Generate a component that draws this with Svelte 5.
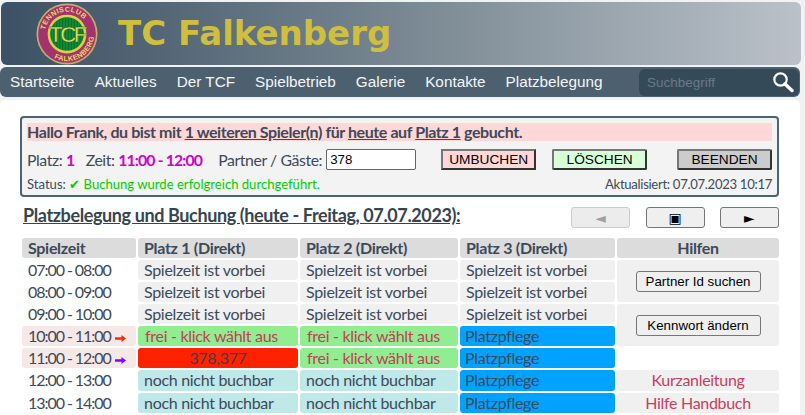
<script>
  const vorbei = 'Spielzeit ist vorbei';
  const frei = 'frei - klick wählt aus';
  const noch = 'noch nicht buchbar';
  const pflege = 'Platzpflege';
  const nav = ['Startseite', 'Aktuelles', 'Der TCF', 'Spielbetrieb', 'Galerie', 'Kontakte', 'Platzbelegung'];
  const rows = [
    { t: '07:00 - 08:00', c: [['past', vorbei], ['past', vorbei], ['past', vorbei]] },
    { t: '08:00 - 09:00', c: [['past', vorbei], ['past', vorbei], ['past', vorbei]] },
    { t: '09:00 - 10:00', c: [['past', vorbei], ['past', vorbei], ['past', vorbei]] },
    { t: '10:00 - 11:00', a: 'red', c: [['free', frei], ['free', frei], ['care', pflege]] },
    { t: '11:00 - 12:00', a: 'violet', c: [['booked', '378,377'], ['free', frei], ['care', pflege]] },
    { t: '12:00 - 13:00', c: [['later', noch], ['later', noch], ['care', pflege]] },
    { t: '13:00 - 14:00', c: [['later', noch], ['later', noch], ['care', pflege]] }
  ];
</script>

<div class="page">
  <header class="banner">
    <svg class="logo" viewBox="0 0 64 64" width="62" height="62" aria-label="Tennisclub Falkenberg">
      <defs>
        <path id="arcTop" d="M9 32 A23 23 0 0 1 55 32" />
        <path id="arcBot" d="M4 32 A28 28 0 0 0 60 32" />
        <pattern id="stripes" width="3" height="3" patternUnits="userSpaceOnUse">
          <rect width="3" height="3" fill="#138a35" />
          <rect width="1" height="3" fill="#0c6a2a" />
        </pattern>
      </defs>
      <circle cx="32" cy="32" r="31.5" fill="#c2b06a" />
      <circle cx="32" cy="32" r="29.8" fill="#a2336c" />
      <circle cx="32" cy="32" r="20" fill="#d8d24a" />
      <circle cx="32" cy="32" r="17.4" fill="url(#stripes)" />
      <text class="ring" transform="rotate(-15 32 32)"><textPath href="#arcTop" startOffset="50%" text-anchor="middle">TENNISCLUB</textPath></text>
      <text class="ring" transform="rotate(-28 32 32)"><textPath href="#arcBot" startOffset="50%" text-anchor="middle">FALKENBERG</textPath></text>
      <text class="tcf" x="32" y="40" text-anchor="middle">TCF</text>
    </svg>
    <h1>TC Falkenberg</h1>
  </header>

  <nav class="menu">
    <ul>
      {#each nav as item}<li>{item}</li>{/each}
    </ul>
    <div class="search">
      <input placeholder="Suchbegriff" />
      <svg viewBox="0 0 22 22" width="22" height="22" aria-hidden="true">
        <circle cx="8.5" cy="8.5" r="6.2" fill="none" stroke="#fff" stroke-width="2.2" />
        <path d="M13 13 L20 19.5" stroke="#fff" stroke-width="3.4" stroke-linecap="round" />
      </svg>
    </div>
  </nav>

  <main class="content">
    <section class="status">
      <p class="hello">Hallo Frank, du bist mit <u>1 weiteren Spieler(n)</u> für <u>heute</u> auf <u>Platz 1</u> gebucht.</p>
      <div class="form">
        <span class="lbl">Platz: <b>1</b></span>
        <span class="lbl zeit">Zeit: <b>11:00 - 12:00</b></span>
        <span class="lbl gast">Partner / Gäste:</span>
        <input class="partner" value="378" />
        <button class="act umb">UMBUCHEN</button>
        <button class="act los">LÖSCHEN</button>
        <button class="act end">BEENDEN</button>
      </div>
      <div class="foot">
        <span>Status: <em>✔ Buchung wurde erfolgreich durchgeführt.</em></span>
        <span class="upd">Aktualisiert: 07.07.2023 10:17</span>
      </div>
    </section>

    <div class="headline">
      <h2>Platzbelegung und Buchung (heute - Freitag, 07.07.2023):</h2>
      <div class="pager">
        <button disabled>◄</button>
        <button>▣</button>
        <button>►</button>
      </div>
    </div>

    <div class="grid">
      <div class="cell head">Spielzeit</div>
      <div class="cell head">Platz 1 (Direkt)</div>
      <div class="cell head">Platz 2 (Direkt)</div>
      <div class="cell head">Platz 3 (Direkt)</div>
      <div class="cell head mid">Hilfen</div>

      {#each rows as r, i}
        <div class="cell time" class:now={r.a}>
          {r.t}{#if r.a}<svg class="arrow {r.a}" viewBox="0 0 11 7" width="11" height="7" aria-hidden="true"><path d="M0 2.2H6.5V0L11 3.5L6.5 7V4.8H0Z" /></svg>{/if}
        </div>
        {#each r.c as [kind, text]}
          <div class="cell {kind}">{text}</div>
        {/each}
        {#if i === 0}
          <div class="cell past tool two"><button class="help">Partner Id suchen</button></div>
        {:else if i === 2}
          <div class="cell past tool two"><button class="help">Kennwort ändern</button></div>
        {:else if i === 4}
          <div></div>
        {:else if i === 5}
          <div class="cell past mid link">Kurzanleitung</div>
        {:else if i === 6}
          <div class="cell past mid link">Hilfe Handbuch</div>
        {/if}
      {/each}
    </div>
  </main>
</div>

<style>
  :global(body) {
    margin: 0;
    background: #f1f3f2;
    overflow: hidden;
  }
  .page {
    width: 805px;
    height: 415px;
    overflow: hidden;
    font-family: "Lato", "Liberation Sans", sans-serif;
    color: #3c4a5a;
    padding-top: 2px;
    box-sizing: border-box;
  }
  .banner {
    height: 63px;
    margin: 0 4px 2px 1px;
    border-radius: 6px;
    background: linear-gradient(to right, #3c5164, #788791 50%, #bac1c9);
    display: flex;
    align-items: center;
    padding-left: 35px;
  }
  .logo {
    flex: none;
  }
  .ring {
    font: bold 7.4px "Liberation Sans", sans-serif;
    fill: #e8d860;
    letter-spacing: 0.4px;
  }
  .tcf {
    font: 400 23px "Liberation Sans", sans-serif;
    fill: #e8e060;
    stroke: #0c5a24;
    stroke-width: 0.3px;
    letter-spacing: -2.5px;
  }
  h1 {
    margin: -2px 0 0 20px;
    font: bold 34px "DejaVu Sans", sans-serif;
    color: #d0bf3f;
  }
  .menu {
    height: 30px;
    width: 800px;
    background: #4d6070;
    border-radius: 6px;
    display: flex;
    justify-content: space-between;
    align-items: center;
  }
  ul {
    list-style: none;
    display: flex;
    margin: 0;
    padding: 0;
    font: 15.3px "Liberation Sans", sans-serif;
    color: #f4f6f8;
  }
  li {
    padding: 0 10px;
  }
  .search {
    width: 160px;
    height: 27px;
    margin-right: 1px;
    background: #354a59;
    border-radius: 6px;
    display: flex;
    align-items: center;
    justify-content: space-between;
    padding: 0 5px 0 8px;
    box-sizing: border-box;
  }
  .search input {
    width: 110px;
    background: none;
    border: 0;
    outline: 0;
    padding: 0;
    font: 13.5px "Liberation Sans", sans-serif;
  }
  .search input::placeholder {
    color: #69798a;
    opacity: 1;
  }
  .content {
    width: 800px;
    height: 320px;
    box-sizing: border-box;
    margin-top: 3px;
    background: #fff;
    border-radius: 5px;
    padding: 16px 21px 0 20px;
  }
  .status {
    border: 2px solid #4a6572;
    border-radius: 4px;
    background: #f3f3f3;
    height: 81px;
    box-sizing: border-box;
    padding: 5px 5px 0;
  }
  .hello {
    margin: 0;
    height: 18px;
    line-height: 18px;
    background: #ffd7d7;
    font-weight: 700;
    font-size: 16px;
    letter-spacing: -0.42px;
  }
  .form {
    display: flex;
    align-items: center;
    height: 21px;
    margin-top: 8px;
    font-size: 15.8px;
    letter-spacing: -0.4px;
  }
  .lbl {
    white-space: nowrap;
  }
  .form b {
    color: #d000d0;
  }
  .zeit {
    margin-left: 11px;
  }
  .zeit b {
    letter-spacing: -0.85px;
  }
  .gast {
    margin-left: 16px;
  }
  .partner {
    width: 90px;
    height: 21px;
    box-sizing: border-box;
    margin-left: 4px;
    border: 1px solid #666;
    border-radius: 2px;
    padding: 0 3px;
    font: 13.3px "Liberation Sans", sans-serif;
    color: #000;
    background: #fff;
  }
  .act {
    height: 21px;
    width: 95px;
    padding: 0;
    font: 13.7px "Liberation Sans", sans-serif;
    color: #000;
    border: 2px solid;
    border-color: #767676 #333 #333 #767676;
    border-radius: 2px;
    box-sizing: border-box;
  }
  .umb {
    background: #ffd7d7;
    margin-left: 25px;
    border-radius: 0;
  }
  .los {
    background: #d7ffd7;
    margin-left: 16px;
  }
  .end {
    background: #ccc;
    margin-left: auto;
  }
  .foot {
    display: flex;
    justify-content: space-between;
    margin-top: 7px;
    font-size: 13.1px;
    line-height: 15px;
  }
  .upd {
    letter-spacing: -0.3px;
  }
  .foot em {
    font-style: normal;
    color: #00d000;
  }
  .headline {
    display: flex;
    justify-content: space-between;
    align-items: center;
    height: 31px;
    margin-top: 5px;
    padding-left: 3px;
  }
  h2 {
    margin: 0 0 5px;
    font-size: 18px;
    font-weight: 700;
    letter-spacing: -0.39px;
    text-decoration: underline;
    color: #37454f;
  }
  .pager {
    display: flex;
    gap: 15.5px;
  }
  .pager button {
    width: 59px;
    height: 21px;
    padding: 0;
    background: #efefef;
    border: 1px solid #767676;
    border-radius: 3px;
    color: #000;
    font: 14px "DejaVu Sans", sans-serif;
  }
  .pager button:disabled {
    background: #ececec;
    border-color: #ccc;
    color: #a0a0a0;
  }
  .grid {
    display: grid;
    grid-template-columns: 114px 160px 158px 155px 162px;
    grid-template-rows: repeat(6, 20px) 21px 20px;
    gap: 2px;
    margin-top: 5px;
    margin-left: 2px;
    width: 757px;
    font-size: 16px;
    letter-spacing: -0.3px;
  }
  .cell {
    border-radius: 3px;
    padding-left: 6px;
    line-height: 20px;
    white-space: nowrap;
    overflow: hidden;
  }
  .head {
    background: #dcdcdc;
    font-weight: 700;
  }
  .mid {
    padding: 0;
    text-align: center;
  }
  .past {
    background: #f0f0f0;
  }
  .time {
    letter-spacing: -1.05px;
  }
  .time.now {
    background: #f7e8e8;
  }
  .arrow {
    margin-left: 4px;
    fill: currentColor;
  }
  .red {
    color: #ff2a00;
  }
  .violet {
    color: #8800ff;
  }
  .free {
    background: #90ee90;
    color: #c0405a;
    padding-left: 7px;
  }
  .booked {
    background: #ff2200;
    text-align: center;
    padding: 0;
    color: #4a3a44;
  }
  .care {
    background: #00a2ff;
    padding-left: 5px;
  }
  .later {
    background: #bfe8e8;
  }
  .link {
    color: #c8405c;
  }
  .tool {
    display: flex;
    align-items: center;
    justify-content: center;
    padding: 0;
  }
  .two {
    grid-row: span 2;
  }
  .help {
    width: 125px;
    height: 21px;
    padding: 0;
    background: #efefef;
    border: 1px solid #767676;
    border-radius: 3px;
    color: #000;
    font: 13.3px "Liberation Sans", sans-serif;
  }
</style>
